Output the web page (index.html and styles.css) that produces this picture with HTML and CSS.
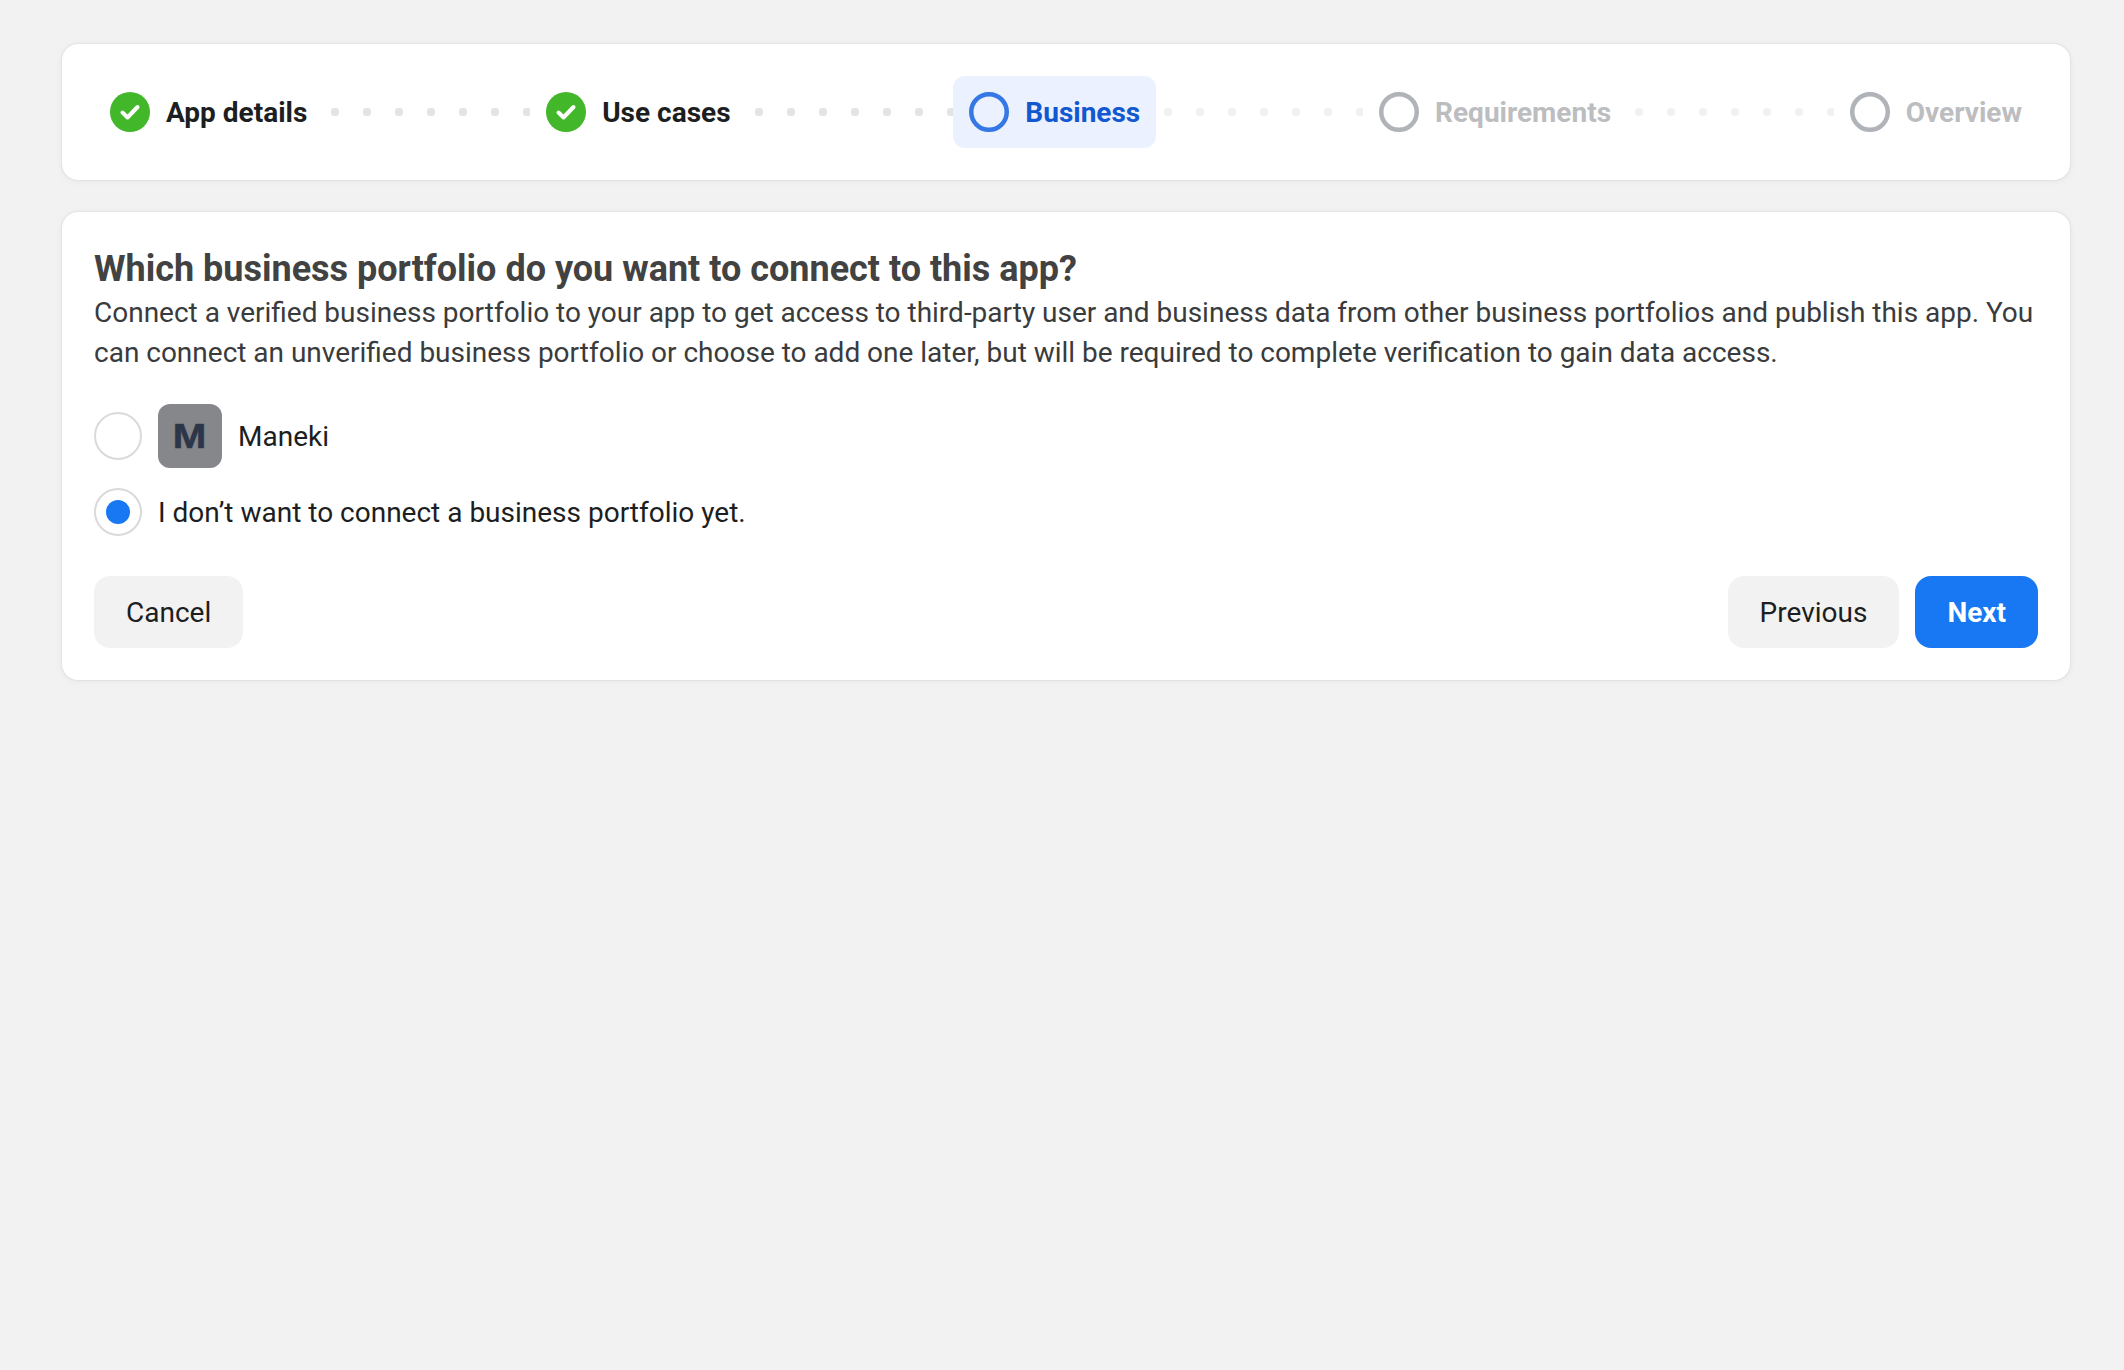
FILE: index.html
```html
<!DOCTYPE html>
<html lang="en">
<head>
<meta charset="utf-8">
<title>Business</title>
<link rel="stylesheet" href="styles.css">
</head>
<body>
<main class="page">
  <nav class="card stepper">
    <div class="step done">
      <svg class="step-icon" viewBox="0 0 40 40"><circle cx="20" cy="20" r="20" fill="#42b72a"/><path d="M12.5 20.5l5 5 10-10.5" fill="none" stroke="#fff" stroke-width="4" stroke-linecap="round" stroke-linejoin="round"/></svg>
      <span>App details</span>
    </div>
    <div class="dots"></div>
    <div class="step done">
      <svg class="step-icon" viewBox="0 0 40 40"><circle cx="20" cy="20" r="20" fill="#42b72a"/><path d="M12.5 20.5l5 5 10-10.5" fill="none" stroke="#fff" stroke-width="4" stroke-linecap="round" stroke-linejoin="round"/></svg>
      <span>Use cases</span>
    </div>
    <div class="dots"></div>
    <div class="step current">
      <svg class="step-icon" viewBox="0 0 40 40"><circle cx="20" cy="20" r="17.75" fill="none" stroke="#3578e5" stroke-width="4.5"/></svg>
      <span>Business</span>
    </div>
    <div class="dots light"></div>
    <div class="step todo">
      <svg class="step-icon" viewBox="0 0 40 40"><circle cx="20" cy="20" r="17.75" fill="none" stroke="#b0b3b8" stroke-width="4.5"/></svg>
      <span>Requirements</span>
    </div>
    <div class="dots light"></div>
    <div class="step todo">
      <svg class="step-icon" viewBox="0 0 40 40"><circle cx="20" cy="20" r="17.75" fill="none" stroke="#b0b3b8" stroke-width="4.5"/></svg>
      <span>Overview</span>
    </div>
  </nav>
  <section class="card panel">
    <h1 class="title">Which business portfolio do you want to connect to this app?</h1>
    <p class="desc">Connect a verified business portfolio to your app to get access to third-party user and business data from other business portfolios and publish this app. You can connect an unverified business portfolio or choose to add one later, but will be required to complete verification to gain data access.</p>
    <div class="options">
      <div class="option">
        <span class="radio"></span>
        <span class="avatar"><span class="avatar-letter">M</span></span>
        <span>Maneki</span>
      </div>
      <div class="option">
        <span class="radio checked"></span>
        <span>I don’t want to connect a business portfolio yet.</span>
      </div>
    </div>
    <div class="actions">
      <button class="btn">Cancel</button>
      <div class="actions-right">
        <button class="btn">Previous</button>
        <button class="btn primary">Next</button>
      </div>
    </div>
  </section>
</main>
</body>
</html>
```
FILE: styles.css
```css
* { box-sizing: border-box; }
html, body { margin: 0; height: 100%; }
body {
  background: #f2f2f2;
  font-family: Roboto, "Liberation Sans", sans-serif;
  color: #1c1e21;
}
.page {
  padding: 44px 54px 0 62px;
  display: flex;
  flex-direction: column;
  gap: 32px;
}
.card {
  background: #fff;
  border-radius: 16px;
  box-shadow: 0 0 2px rgba(0, 0, 0, 0.14), 0 1px 8px rgba(0, 0, 0, 0.05);
}
.stepper {
  display: flex;
  align-items: center;
  padding: 32px;
}
.step {
  display: flex;
  align-items: center;
  gap: 16px;
  height: 72px;
  padding: 0 16px;
  border-radius: 12px;
  font-size: 28px;
  font-weight: 700;
  white-space: nowrap;
}
.step-icon { width: 40px; height: 40px; flex: none; }
.step.current { background: #ebf1fe; color: #1258d0; }
.step.todo { color: #bcbdbf; }
.dots {
  flex: 1;
  height: 8px;
  background-image: radial-gradient(circle at 12px 4px, #e4e4e4 4px, transparent 4.6px);
  background-size: 32px 8px;
  background-repeat: repeat-x;
}
.dots.light {
  background-image: radial-gradient(circle at 12px 4px, #f1f1f1 4px, transparent 4.6px);
}
.panel { padding: 32px; }
.title {
  margin: 0 0 -1px;
  font-size: 36px;
  line-height: 50px;
  font-weight: 700;
  color: #424242;
}
.desc {
  margin: 0;
  font-size: 28px;
  line-height: 40px;
  color: #3a3b3c;
  word-spacing: -0.06px;
}
.options {
  margin-top: 31px;
  display: flex;
  flex-direction: column;
  gap: 20px;
}
.option {
  display: flex;
  align-items: center;
  gap: 16px;
  font-size: 28px;
}
.radio {
  width: 48px;
  height: 48px;
  flex: none;
  border-radius: 50%;
  border: 2px solid #dadada;
  background: #fff;
  display: flex;
  align-items: center;
  justify-content: center;
}
.radio.checked::before {
  content: "";
  width: 24px;
  height: 24px;
  border-radius: 50%;
  background: #1877f2;
}
.avatar {
  width: 64px;
  height: 64px;
  flex: none;
  border-radius: 12px;
  background: #86878b;
  color: #2c3648;
  display: flex;
  align-items: center;
  justify-content: center;
  font-family: "Liberation Sans", sans-serif;
  font-size: 35px;
  font-weight: 700;
}
.avatar-letter {
  display: block;
  transform: scaleX(1.15);
  -webkit-text-stroke: 0.6px #2c3648;
}
.actions {
  margin-top: 40px;
  display: flex;
  justify-content: space-between;
}
.actions-right { display: flex; gap: 16px; }
.btn {
  height: 72px;
  padding: 0 32px;
  border: 0;
  border-radius: 16px;
  background: #f2f2f2;
  color: #1c1e21;
  font-family: inherit;
  font-size: 28px;
}
.btn.primary {
  background: #1877f2;
  color: #fff;
  font-weight: 700;
}
```
